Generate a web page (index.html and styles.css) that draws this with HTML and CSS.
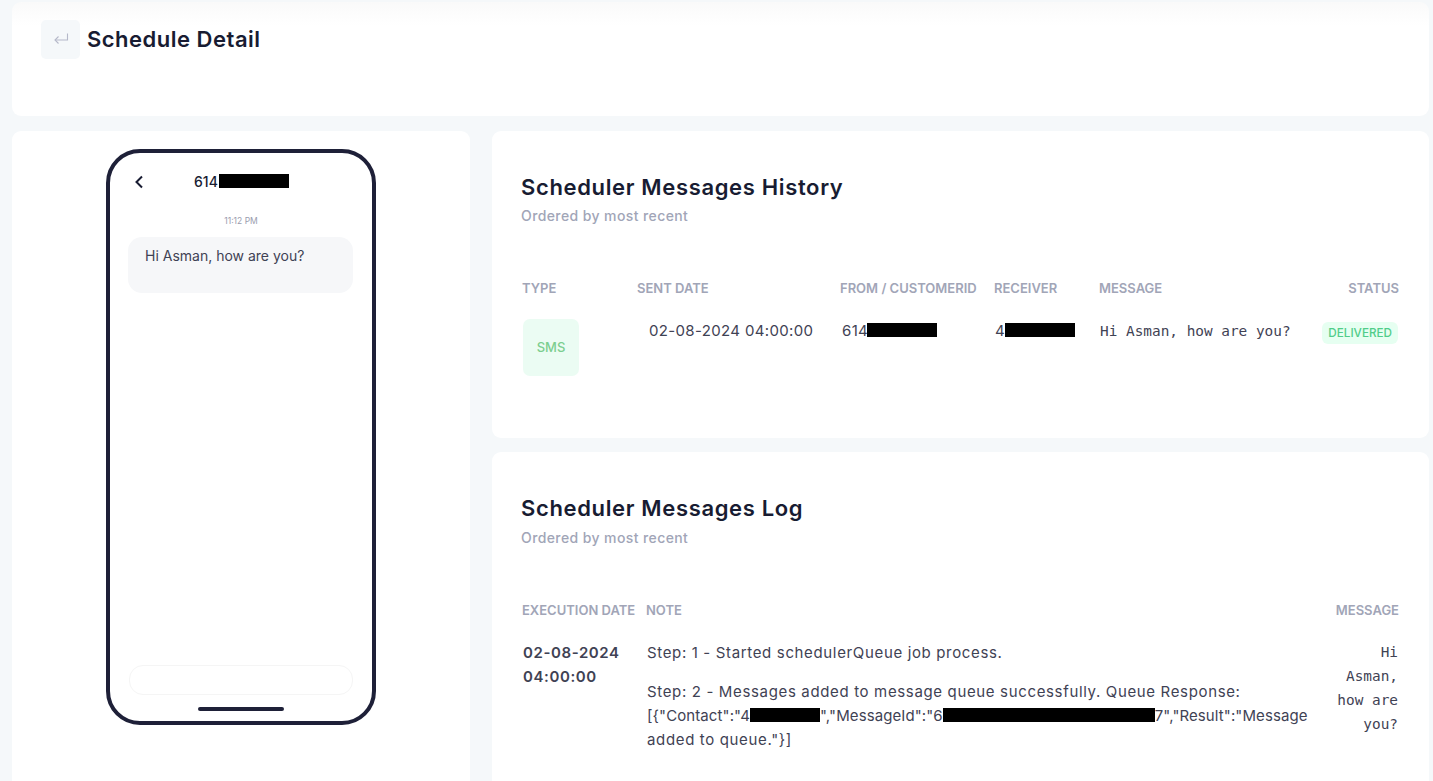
FILE: index.html
```html
<!DOCTYPE html>
<html lang="en">
<head>
<meta charset="utf-8">
<title>Schedule Detail</title>
<link rel="stylesheet" href="styles.css">
</head>
<body>
<main class="page">
  <header class="card top-card">
    <button class="back-btn" type="button" aria-label="Back">
      <svg width="16" height="14" viewBox="0 0 16 14" fill="none" stroke="#b5b8c9" stroke-width="1.1"><path d="M14.5 0.5v6.5H2"/><path d="M5.5 3.5L2 7 5.5 10.5"/></svg>
    </button>
    <h1>Schedule Detail</h1>
  </header>
  <div class="content">
    <aside class="card phone-card">
      <div class="phone">
        <div class="phone-head">
          <svg class="chevron" width="10" height="14" viewBox="0 0 10 14" fill="none" stroke="#181c32" stroke-width="2"><path d="M8 1.5L2.5 7 8 12.5"/></svg>
          <span class="phone-num">614<span class="redact phone-redact"></span></span>
        </div>
        <div class="phone-time">11:12 PM</div>
        <div class="bubble">Hi Asman, how are you?</div>
        <div class="phone-input"></div>
        <div class="home-bar"></div>
      </div>
    </aside>
    <div class="stack">
      <section class="card panel panel-history">
        <h2>Scheduler Messages History</h2>
        <p class="sub">Ordered by most recent</p>
        <div class="table history">
          <div class="th">Type</div>
          <div class="th">Sent Date</div>
          <div class="th">From / CustomerId</div>
          <div class="th">Receiver</div>
          <div class="th">Message</div>
          <div class="th right">Status</div>
          <div><span class="sms">SMS</span></div>
          <div class="td date-cell">02-08-2024 04:00:00</div>
          <div class="td from-cell">614<span class="redact r70"></span></div>
          <div class="td recv-cell">4<span class="redact r70"></span></div>
          <div class="mono msg-cell">Hi Asman, how are you?</div>
          <div class="right"><span class="badge">DELIVERED</span></div>
        </div>
      </section>
      <section class="card panel">
        <h2>Scheduler Messages Log</h2>
        <p class="sub sub-log">Ordered by most recent</p>
        <div class="table log">
          <div class="th">Execution Date</div>
          <div class="th">Note</div>
          <div class="th right">Message</div>
          <div class="td strong">02-08-2024 04:00:00</div>
          <div class="td note">
            <p>Step: 1 - Started schedulerQueue job process.</p>
            <p>Step: 2 - Messages added to message queue successfully. Queue Response: <span class="token">[{"Contact":"4<span class="redact r70"></span>","MessageId":"6<span class="redact r212"></span>7","Result":"Message</span> added to queue."}]</p>
          </div>
          <div class="mono right log-msg">Hi Asman, how are you?</div>
        </div>
      </section>
    </div>
  </div>
</main>
</body>
</html>
```

FILE: styles.css
```css
* { box-sizing: border-box; }
html, body { margin: 0; height: 781px; overflow: hidden; }
body {
  background: #f5f8fa;
  font-family: Inter, "Liberation Sans", sans-serif;
  color: #3f4254;
}
.page { padding: 2px 4px 0 12px; }
.card { background: #fff; border-radius: 9px; }
.top-card {
  height: 114px;
  padding: 18px 29px;
  display: flex;
  align-items: flex-start;
  gap: 7px;
  background: linear-gradient(#fafafa, #fff 24px);
  margin-bottom: 15px;
}
.back-btn {
  width: 39px;
  height: 39px;
  padding: 0;
  border: 0;
  border-radius: 5px;
  background: #f5f8fa;
  display: flex;
  align-items: center;
  justify-content: center;
}
h1 {
  margin: 0;
  font-size: 22px;
  line-height: 39px;
  font-weight: 600;
  color: #181c32;
  letter-spacing: 0.5px;
}
.content {
  display: grid;
  grid-template-columns: 458px 937px;
  gap: 22px;
}
.phone-card { height: 660px; padding: 18px 94px 0; }
.phone {
  width: 270px;
  height: 576px;
  border: 4px solid #1e2038;
  border-radius: 34px;
  display: flex;
  flex-direction: column;
  align-items: center;
  padding: 0 18px;
}
.phone-head {
  width: 100%;
  height: 34px;
  margin-top: 11px;
  display: flex;
  align-items: center;
  padding-left: 6px;
}
.chevron { flex: none; margin: 2px 50px 0 0; }
.phone-num {
  font-size: 14px;
  font-weight: 500;
  color: #181c32;
  display: flex;
  align-items: center;
}
.phone-redact { width: 70px; height: 13px; margin-left: 1px; }
.phone-time {
  margin-top: 17px;
  font-size: 8.5px;
  line-height: 12px;
  color: #9a9cae;
}
.bubble {
  align-self: flex-start;
  width: 225px;
  height: 56px;
  margin-top: 10px;
  padding: 7px 17px;
  border-radius: 14px;
  background: #f6f7f9;
  font-size: 14px;
  line-height: 24px;
  color: #3f4254;
}
.phone-input {
  align-self: flex-start;
  width: 224px;
  height: 30px;
  margin: auto 0 0 1px;
  border: 1px solid #f5f5f5;
  border-radius: 14px;
}
.home-bar {
  width: 86px;
  height: 4px;
  margin: 12px 0 10px;
  border-radius: 2px;
  background: #1e2038;
}
.stack { display: flex; flex-direction: column; gap: 14px; }
.panel { padding: 40px 30px 30px 29px; min-height: 307px; }
h2 {
  margin: 0;
  font-size: 22px;
  line-height: 33px;
  font-weight: 600;
  color: #181c32;
  letter-spacing: 0.65px;
}
.sub {
  margin: 2px 0 53px;
  font-size: 14px;
  line-height: 20px;
  font-weight: 500;
  letter-spacing: 0.4px;
  color: #a1a5b7;
}
.sub-log { margin-top: 3px; }
.table { display: grid; row-gap: 22px; align-items: start; padding-left: 1px; }
.history { grid-template-columns: 115px 203px 154px 105px minmax(0, 1fr) 108px; }
.log { grid-template-columns: 124px minmax(0, 1fr) 70px; }
.th {
  font-size: 13px;
  line-height: 18px;
  font-weight: 600;
  text-transform: uppercase;
  white-space: nowrap;
  color: #a1a5b7;
}
.right { text-align: right; }
.td { font-size: 15px; line-height: 24px; letter-spacing: 0.35px; color: #3f4254; }
.date-cell { padding-left: 12px; }
.from-cell { padding-left: 2px; }
.from-cell .redact { margin-left: -1px; }
.recv-cell { padding-left: 1px; }
.msg-cell { padding-left: 1px; white-space: nowrap; }
.sms {
  display: flex;
  align-items: center;
  justify-content: center;
  width: 56px;
  height: 57px;
  margin-left: 1px;
  padding-bottom: 2px;
  border-radius: 7px;
  background: #ebfcf3;
  color: #7cce8f;
  font-size: 13px;
  font-weight: 500;
}
.badge {
  display: inline-block;
  margin: 3px 1px 0 0;
  padding: 0 6px;
  height: 22px;
  border-radius: 6px;
  background: #e6fff1;
  color: #50cd89;
  font-size: 11.7px;
  line-height: 22px;
  font-weight: 500;
}
.mono {
  font-family: "DejaVu Sans Mono", "Liberation Mono", monospace;
  font-size: 14.4px;
  line-height: 24px;
  color: #3f4254;
}
.log-msg { margin-top: -1px; padding-right: 1px; }
.strong { font-weight: 600; padding-left: 1px; letter-spacing: 0.6px; color: #3f4254; }
.note { padding: 0 10px 0 1px; letter-spacing: 0.65px; }
.note p { margin: 0 0 15px; }
.token { white-space: nowrap; letter-spacing: 0.1px; }
.redact { display: inline-block; background: #000; height: 14px; vertical-align: -1px; }
.r70 { width: 70px; }
.r212 { width: 212px; }
```
